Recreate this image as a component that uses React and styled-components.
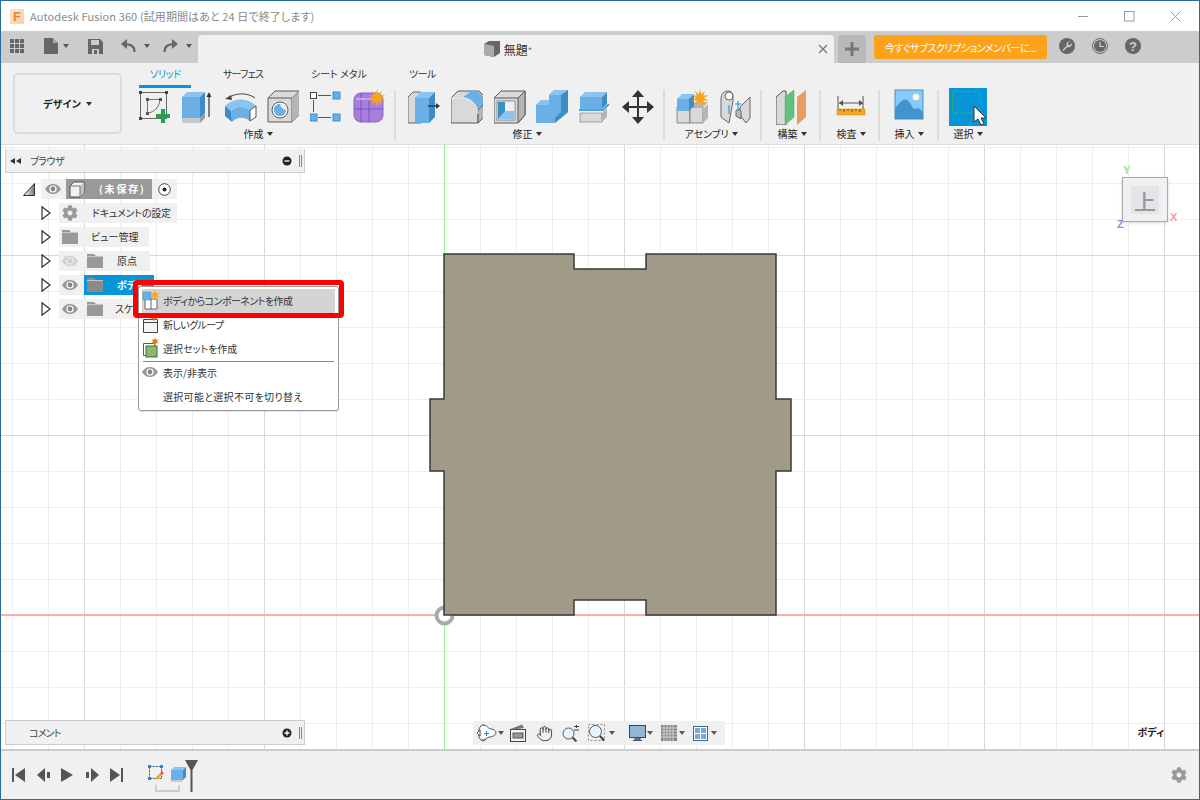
import React from "react";
import styled, { createGlobalStyle } from "styled-components";
import { FaCog } from "react-icons/fa";
import { Hand } from "lucide-react";

const Global = createGlobalStyle`
  html, body { margin: 0; padding: 0; background: #fff; overflow: hidden; }
  body { font-family: "Noto Sans CJK JP", "Liberation Sans", sans-serif; font-feature-settings: "palt"; }
  * { box-sizing: border-box; }
`;

const Win = styled.div`
  width: 1200px; height: 800px; border: 1px solid #2b6c9b; display: flex; flex-direction: column; background: #fff; overflow: hidden;
`;
const TitleBar = styled.div`
  height: 30px; background: #fff; display: flex; align-items: center; padding-left: 9px; flex: none;
`;
const Logo = styled.div`
  width: 14px; height: 15px; margin-right: 6px; background: linear-gradient(135deg, #fbe3c8, #f9d2a8); color: #e8842a; font: bold 13px/15px "Liberation Sans", sans-serif; text-align: center;
`;
const TitleText = styled.div`
  font-size: 11px; color: #8a8a8a; white-space: nowrap; letter-spacing: 0.1px;
`;
const WinControls = styled.div`
  margin-left: auto; display: flex; align-items: center; gap: 35px; padding-right: 18px;
`;
const TabBar = styled.div`
  height: 32px; background: #ccc; display: flex; flex: none; align-items: stretch; padding-left: 9px;
`;
const QuickTools = styled.div`
  width: 188px; display: flex; align-items: center; padding-bottom: 2px; flex: none;
`;
const QuickIcon = styled.span`
  display: inline-flex; margin-left: ${p => p.$ml || 0}px; width: ${p => p.$w || 15}px; justify-content: center;
`;
const Caret = styled.span`
  display: inline-block; flex: none; width: 0; height: 0; margin-left: ${p => p.$ml || 0}px;
  border-left: ${p => p.$s || 3}px solid transparent; border-right: ${p => p.$s || 3}px solid transparent;
  border-top: ${p => (p.$s || 3) + 1}px solid ${p => p.$c || "#555"};
`;
const DocTab = styled.div`
  margin-top: 4px; width: 636px; background: #f0f0f0; border-radius: 4px 4px 0 0; position: relative; display: flex; align-items: center; justify-content: center; font-size: 12px; color: #333; gap: 4px; padding-right: 16px; flex: none;
`;
const TabStar = styled.span`
  color: #a66; font-size: 10px;
`;
const TabClose = styled.span`
  position: absolute; right: 6px; top: 9px; display: flex;
`;
const AddTab = styled.div`
  margin: 4px 0 0 4px; width: 28px; background: #b9b9b9; border-radius: 4px 4px 0 0; display: flex; align-items: center; justify-content: center; flex: none;
`;
const Upgrade = styled.div`
  margin: 4px 0 4px 8px; width: 173px; background: #fca31b; color: #fff; font-size: 10px; letter-spacing: -0.45px; border-radius: 3px; display: flex; align-items: center; justify-content: center; flex: none; white-space: nowrap;
`;
const RoundTools = styled.div`
  display: flex; align-items: center; gap: 17px; margin-left: 12px; padding-bottom: 2px;
`;
const Ribbon = styled.div`
  height: 82px; background: #f0f0f0; display: flex; flex: none; border-bottom: 1px solid #ddd; padding-left: 12px;
`;
const DesignBtn = styled.div`
  margin-top: 10px; width: 109px; height: 61px; border: 2px solid #dcdcdc; border-radius: 5px; display: flex; align-items: center; justify-content: center; gap: 5px; font-size: 10px; font-weight: 700; color: #222; flex: none;
`;
const RibbonMain = styled.div`
  margin-left: 17px; padding-top: 1px; display: flex; flex-direction: column;
`;
const TabRow = styled.div`
  height: 24px; position: relative; display: flex; font-size: 10px; color: #333;
`;
const RibTab = styled.div`
  width: ${p => p.$w}px; padding-left: ${p => p.$pl}px; padding-top: 3px; color: ${p => p.$active ? "#0696d7" : "#333"}; white-space: nowrap; height: 24px; border-bottom: 3px solid ${p => p.$active ? "#0696d7" : "transparent"}; line-height: 14px; letter-spacing: ${p => p.$ls || 0}px;
`;
const RibTabSpacer = styled.div`
  width: ${p => p.$w}px;
`;
const Groups = styled.div`
  display: flex;
`;
const Group = styled.div`
  width: ${p => p.$w}px; padding-left: ${p => p.$pl || 0}px; position: relative; display: flex; flex-direction: column; flex: none;
  ${p => p.$sep ? `&::after { content: ""; position: absolute; right: 0; top: 2px; width: 2px; height: 51px; background: #dcdcdc; }` : ""}
`;
const IconRow = styled.div`
  display: flex; gap: ${p => p.$gap || 0}px; height: 36px; align-items: flex-start; padding-top: 1px;
`;
const Slot = styled.div`
  width: ${p => p.$w || 32}px; height: 36px; flex: none;
`;
const GroupLabel = styled.div`
  width: ${p => p.$w}px; padding-right: ${p => p.$pr || 0}px; margin-top: 3px; display: flex; align-items: center; justify-content: center; gap: 3px; font-size: 10px; line-height: 14px; color: #222; white-space: nowrap;
`;
const Canvas = styled.div`
  flex: 1; position: relative; overflow: hidden; background: #fff;
`;
const CanvasArt = styled.svg`
  display: block; position: absolute; left: 0; top: 0;
`;
const Dock = styled.div`
  position: absolute; left: 4px; top: 4px; width: 300px;
`;
const PanelHead = styled.div`
  height: 24px; width: 300px; background: #f0f0f0; border: 1px solid #ccc; border-top: none; display: flex; align-items: center; font-size: 10px; color: #444; padding: 0 2px 0 4px;
  ${p => p.$full ? "border-top: 1px solid #ccc; height: 25px;" : ""}
`;
const PanelTitle = styled.span`
  margin-left: ${p => p.$ml}px; flex: 1; letter-spacing: ${p => p.$ls || 0}px;
`;
const Handle = styled.span`
  width: 3px; height: 12px; border-left: 1px solid #888; border-right: 1px solid #888; margin-left: 7px;
`;
const Tree = styled.div`
  padding-top: 6px; display: flex; flex-direction: column; gap: 4px;
`;
const Row = styled.div`
  height: 20px; display: flex; align-items: center; padding-left: ${p => p.$indent}px;
`;
const Toggle = styled.span`
  width: 18px; display: flex; flex: none;
`;
const Chip = styled.div`
  height: 20px; width: ${p => p.$w}px; background: #f0f0f0; display: flex; align-items: center; padding-left: ${p => p.$pl ?? 3}px; font-size: 10px; color: #333; white-space: nowrap; flex: none;
`;
const IconCell = styled.span`
  width: 16px; height: 16px; flex: none; display: flex; align-items: center; justify-content: center; margin-left: ${p => p.$ml || 0}px;
  & + & { margin-left: 9px; }
`;
const RowText = styled.span`
  margin-left: ${p => p.$ml ?? 14}px; letter-spacing: ${p => p.$ls || 0}px; padding-bottom: 1px;
`;
const RootChip = styled.div`
  width: 86px; height: 20px; margin-left: 5px; background: #999; color: #fff; font-weight: 700; display: flex; align-items: center; padding-left: 3px; font-size: 10px; white-space: nowrap;
`;
const SelChip = styled.div`
  width: 70px; height: 20px; background: #0696d7; color: #fff; font-weight: 700; display: flex; align-items: center; padding-left: 3px; font-size: 10px; flex: none;
`;
const Menu = styled.div`
  position: absolute; left: 137px; top: 141px; width: 201px; height: 125px; background: #fff; border: 1px solid #999; border-radius: 3px; padding: 2px 3px; z-index: 3; box-shadow: 0 1px 1px rgba(0,0,0,.1);
`;
const MenuItem = styled.div`
  height: 24px; display: flex; align-items: center; font-size: 10px; color: #333; background: ${p => p.$hi ? "#d4d4d4" : "transparent"}; white-space: nowrap; padding-bottom: 2px; letter-spacing: ${p => p.$ls || 0}px;
`;
const MenuIcon = styled.span`
  width: 21px; height: 20px; flex: none; display: flex; align-items: center;
`;
const MenuSep = styled.div`
  height: 1px; background: #888; margin: 0 1px -1px;
`;
const RedFrame = styled.div`
  position: absolute; left: -6px; top: -7px; width: 211px; height: 38px; border: 5px solid #f00; border-radius: 4px;
`;
const ViewCube = styled.div`
  position: absolute; left: 1121px; top: 32px; width: 46px; height: 45px; background: #f0f0f0; border: 1px solid #aaa; box-shadow: 0 1px 3px rgba(0,0,0,.15); display: flex; align-items: center; justify-content: center;
`;
const CubeFace = styled.div`
  width: 28px; height: 28px; background: #e4e4ea; color: #999; font-size: 22px; font-weight: 500; display: flex; align-items: center; justify-content: center;
`;
const Axis = styled.span`
  position: absolute; left: ${p => p.$x}px; top: ${p => p.$y}px; color: ${p => p.$c}; font: bold 11px/12px "Liberation Sans", sans-serif;
`;
const CommentDock = styled.div`
  position: absolute; left: 4px; bottom: 4px; width: 300px;
`;
const NavBar = styled.div`
  position: absolute; left: 472px; bottom: 4px; width: 252px; height: 24px; background: #f0f0f0; display: flex; align-items: center;
`;
const NavItem = styled.span`
  display: inline-flex; margin-left: ${p => p.$ml || 0}px; flex: none;
`;
const Context = styled.div`
  position: absolute; right: 35px; bottom: 10px; font-size: 10px; font-weight: 700; color: #222;
`;
const Timeline = styled.div`
  height: 50px; flex: none; background: #f0f0f0; border-top: 2px solid #ccc; display: flex; align-items: center; padding: 0 12px 0 11px;
`;
const PlayBtn = styled.span`
  display: flex; width: 13px; margin-right: 11.5px; flex: none;
`;
const Track = styled.div`
  position: relative; margin-left: 13.5px; display: flex; gap: 7px; align-items: flex-start; padding-top: 5px; height: 30px; width: 60px;
`;
const Bracket = styled.div`
  position: absolute; left: 7px; top: 25px; width: 25px; height: 7px; border: 2px solid #ccc; border-top: none;
`;
const Marker = styled.div`
  position: absolute; left: 37px; top: 0;
`;
const GearWrap = styled.span`
  margin-left: auto; display: flex; color: #999;
`;

const star = (cx, cy, r1, r2, n = 10) =>
  Array.from({ length: n * 2 }, (_, i) => {
    const r = i % 2 ? r2 : r1, a = (Math.PI * i) / n - Math.PI / 2;
    return `${(cx + r * Math.cos(a)).toFixed(1)},${(cy + r * Math.sin(a)).toFixed(1)}`;
  }).join(" ");

const B1 = "#6ab0e6", B2 = "#3f8dc6", B3 = "#8cc4f0", G1 = "#d9d9d9", G2 = "#b5b5b5", OL = "#5a5a5a", OR = "#f9a51a";
const Icon = ({ w = 32, h = 36, children }) => <svg width={w} height={h} viewBox={`0 0 ${w} ${h}`} style={{ display: "block" }}>{children}</svg>;

const SketchIc = () => <Icon>
  <rect x="1.5" y="3.5" width="26" height="26" fill="none" stroke="#666" />
  {[[0, 2], [26, 2], [0, 28]].map(([x, y], i) => <rect key={i} x={x} y={y} width="3" height="3" fill="#444" />)}
  <path d="M8.5 11.5V24.5M8.5 10.5H21.5" stroke="#777" fill="none" />
  <rect x="7" y="9" width="3" height="3" fill="#555" /><rect x="20" y="9" width="3" height="3" fill="#555" /><rect x="7" y="23" width="3" height="3" fill="#555" />
  <path d="M21 11C20 18 16 23 9 24" stroke="#666" fill="none" />
  <path d="M22 20h4v5h5v4h-5v5h-4v-5h-5v-4h5z" fill="#22a24a" />
</Icon>;
const ExtrudeIc = () => <Icon>
  <path d="M0 29h18v5H0z" fill="#c8c8c8" /><path d="M18 29l5-5v5l-5 5z" fill="#999" />
  <path d="M0 8h18v21H0z" fill={B1} /><path d="M0 8l5-5h18l-5 5z" fill={B3} /><path d="M18 8l5-5v21l-5 5z" fill={B2} />
  <path d="M27 28V6" stroke="#333" strokeWidth="1.2" /><path d="M24.5 8L27 3l2.500 5z" fill="#333" />
</Icon>;
const RevolveIc = () => <Icon>
  <path d="M3 9C10 4 22 3 30 9" stroke="#444" fill="none" /><path d="M0 10l6-4 1 5z" fill="#444" />
  <path d="M0 17C8 9 22 8 31 17l-6 4C18 17 11 17 6 22z" fill={B3} />
  <path d="M6 22C11 17 18 17 25 21v11C18 27 12 28 7 33z" fill={B1} />
  <path d="M0 17l6 5 1 11-7-6z" fill={B2} />
  <path d="M25 21l6-4v11l-6 4z" fill="#fff" stroke="#555" />
</Icon>;
const HoleIc = () => <Icon>
  <path d="M1 9L8 2h24v24l-7 7H1z" fill={G1} stroke={OL} />
  <path d="M1 9h24v24M25 9l7-7" fill="none" stroke={OL} />
  <path d="M25 9l7-7v24l-7 7z" fill={G2} />
  <circle cx="13" cy="21" r="8" fill="#fff" stroke={OL} /><circle cx="13" cy="21" r="6.2" fill={B1} />
  <path d="M13 14.5a6.5 6.5 0 0 1 6.5 6.5c-3 0-6-2-6.5-6.5z" fill="#eee" />
</Icon>;
const PatternIc = () => <Icon>
  <rect x="0.5" y="3.5" width="6" height="6" fill="#fff" stroke="#444" />
  <rect x="23" y="3" width="7" height="7" fill={B1} stroke={B2} />
  <rect x="0" y="25" width="7" height="7" fill={B1} stroke={B2} />
  <rect x="23" y="25" width="7" height="7" fill={B1} stroke={B2} />
  <path d="M8 6.5H21M3.5 11V23M8 28.5H21" stroke="#555" />
</Icon>;
const SolidStarIc = () => <Icon>
  <rect x="1" y="4" width="29" height="29" rx="7" fill="#a77fdd" stroke="#8a62c4" />
  <path d="M1 20H30M16 9V33M8 4v29" stroke="#7d55b8" fill="none" />
  <path d="M3 10h20" stroke="#c4a6ee" strokeWidth="2" />
  <polygon points={star(24, 9, 9, 4)} fill={OR} />
</Icon>;
const PressIc = () => <Icon>
  <path d="M0 8l5-5h8v31H0z" fill={G1} stroke="#666" />
  <path d="M7 9h14v25H7z" fill={B1} /><path d="M7 9l5-6h15l-6 6z" fill={B3} /><path d="M21 9l6-6v25l-6 6z" fill={B2} />
  <path d="M20 17H29" stroke="#333" strokeWidth="1.4" /><path d="M28 14l4 3-4 3z" fill="#333" />
</Icon>;
const FilletIc = () => <Icon>
  <path d="M0 9L7 2h21l5 5v7l-6 5v15H0z" fill={G1} stroke={OL} />
  <path d="M22 1c7 1 11 6 11 14l-7 5C24 13 20 10 12 8z" fill={B1} />
  <path d="M27 34V21l6-6v13z" fill={G2} stroke={OL} />
  <path d="M0 9h10c10 0 17 7 17 16" fill="none" stroke="#eee" />
</Icon>;
const ShellIc = () => <Icon>
  <path d="M0 9L7 2h24v24l-7 8H0z" fill={G1} stroke={OL} />
  <path d="M24 9l7-7v24l-7 8z" fill={G2} stroke={OL} /><path d="M0 9h24" stroke={OL} />
  <rect x="3" y="12" width="18" height="19" fill="#fff" stroke="#888" />
  <rect x="4" y="13" width="16" height="17" fill={B2} />
  <path d="M11 13h9v9h-9z" fill="#f0f0f0" /><path d="M4 30l7-8h9v8z" fill={B3} />
</Icon>;
const CombineIc = () => <Icon>
  <path d="M0 16l5-5h8V6l5-5h14v22l-7 6h-6v5H0z" fill={B1} />
  <path d="M18 1h14l-7 5H13zM0 16l5-5h8v5z" fill={B3} />
  <path d="M25 6l7-5v22l-7 6zM19 29l6-6v6l-6 5z" fill={B2} />
</Icon>;
const SplitIc = () => <Icon>
  <path d="M1 8h22v12H1z" fill={B1} /><path d="M1 8l5-5h22l-5 5z" fill={B3} /><path d="M23 8l5-5v12l-5 5z" fill={B2} />
  <path d="M0 21h24l6-6" stroke="#1e88d6" strokeWidth="1.4" fill="none" /><path d="M0 24h24l7-6" stroke="#fff" strokeWidth="1.2" fill="none" />
  <path d="M1 24h22v9H1z" fill={G1} stroke="#777" strokeWidth=".6" /><path d="M23 24l5-5v9l-5 5z" fill={G2} />
</Icon>;
const MoveIc = () => <Icon>
  <path d="M15 7h2v10h10v2H17v10h-2V19H5v-2h10z" fill="#333" />
  <path d="M16 1l6 7H10zM16 35l6-7H10zM0 18l7-6v12zM32 18l-7-6v12z" fill="#333" />
</Icon>;
const ComponentIc = () => <Icon>
  <path d="M1 18h13v16H1z" fill={G1} stroke="#666" strokeWidth=".7" /><path d="M14 18h13v16H14z" fill={G1} stroke="#666" strokeWidth=".7" />
  <path d="M27 20l5-5v14l-5 5zM14 18l5-5h13l-5 5z" fill={G2} />
  <path d="M1 10h12v12H1z" fill={B1} /><path d="M1 10l5-5h12l-5 5z" fill={B3} /><path d="M13 10l5-5v12l-5 5z" fill={B2} />
  <polygon points={star(24, 9, 9, 4)} fill={OR} />
</Icon>;
const JointIc = () => <Icon>
  <path d="M1 10C1 4 5 2 8 2s5 2 5 5v5L9 34 1 28z" fill={G1} stroke="#666" />
  <ellipse cx="9" cy="7" rx="4" ry="4" fill="#fff" stroke="#666" /><path d="M9 16v9" stroke="#1e88d6" />
  <path d="M20 18l10-10v21l-4 5-6-8z" fill={G1} stroke="#666" /><path d="M16 22c0-2 5-2 5 0v8l-5-3z" fill="#bbb" stroke="#666" /><path d="M18 12v10M15 15h6" stroke="#1e88d6" />
</Icon>;
const BuildIc = () => <Icon>
  <path d="M0 8l7-6h3v34H0z" fill={G1} stroke="#555" />
  <path d="M9 8l9-7v27l-9 8z" fill="#62c07e" stroke="#4da868" strokeWidth=".5" />
  <path d="M21 8l9-7v27l-9 8z" fill="#e79c62" />
</Icon>;
const RulerIc = () => <Icon w={30}>
  <path d="M2 7v14M27 7v14" stroke="#555" />
  <path d="M3 14h24" stroke="#555" /><path d="M7 11l-4 3 4 3zM23 11l4 3-4 3z" fill="#555" />
  <rect x="1" y="20" width="28" height="6" fill="#f5a623" stroke="#d68a10" strokeWidth=".5" />
  <path d="M4 20v2M8 20v3M12 20v2M16 20v3M20 20v2M24 20v3" stroke="#7a5200" />
</Icon>;
const ImageIc = () => <Icon w={30}>
  <rect x="1" y="1" width="28" height="29" fill="#8ac9fb" stroke="#4a90c4" />
  <circle cx="22" cy="8" r="3.3" fill="#fffbd8" />
  <path d="M1 20C5 14 9 9 13 11s5 9 8 9 4-3 8 4v6H1z" fill="#4393cf" />
</Icon>;
const SelectTile = () => <svg width="38" height="38" viewBox="0 0 38 38" style={{ display: "block", marginTop: -1 }}>
  <rect width="38" height="38" fill="#0696d7" />
  <rect x="3.5" y="3.5" width="27" height="21.5" fill="none" stroke="#3bb54a" strokeDasharray="4 3" />
  <path d="M25 18v16l4-3 3 6 3-1-3-6h5z" fill="#fff" stroke="#333" />
</svg>;
const Eye = ({ faded }) => <svg width="16" height="12" viewBox="0 0 16 12" style={{ opacity: faded ? .35 : 1 }}>
  <path d="M0 6C3 1.5 5.5 1 8 1s5 .5 8 5c-3 4.5-5.5 5-8 5S3 10.500 0 6z" fill="#999" />
  <circle cx="8" cy="6" r="3.600" fill="#fff" /><circle cx="8" cy="6" r="2.400" fill="#888" />
  {faded && <path d="M2 1l12 10" stroke="#999" strokeWidth="1.5" />}
</svg>;
const Folder = ({ c = "#999" }) => <svg width="16" height="14" viewBox="0 0 16 14">
  <path d="M0 0h7l2 2h7v12H0z" fill={c} /><path d="M0 2.500h16" stroke="#ddd" strokeWidth=".7" />
</svg>;
const Tri = ({ open }) => open
  ? <svg width="12" height="13" viewBox="0 0 12 13"><path d="M.5 12.500L11.500.5v12z" fill="url(#tg)" stroke="#333" /><defs><linearGradient id="tg" x1="0" x2="1"><stop offset="0" stopColor="#fff" /><stop offset="1" stopColor="#777" /></linearGradient></defs></svg>
  : <svg width="10" height="14" viewBox="0 0 10 14"><path d="M1 .8L9 7l-8 6.200z" fill="#fff" stroke="#333" strokeWidth="1.200" /></svg>;
const CompCube = () => <svg width="16" height="17" viewBox="0 0 16 17">
  <path d="M1 5l4-4h10v11l-4 4H1z" fill="#eef2f8" stroke="#333" strokeWidth=".8" /><path d="M11 5l4-4v11l-4 4z" fill="#bcc4d2" /><path d="M1 5h10v11" fill="none" stroke="#777" />
</svg>;
const Radio = () => <svg width="13" height="13" viewBox="0 0 13 13"><circle cx="6.500" cy="6.500" r="5.800" fill="#fff" stroke="#444" /><circle cx="6.500" cy="6.500" r="2" fill="#222" /></svg>;
const RoundBtn = ({ children }) => <svg width="16" height="16" viewBox="0 0 16 16" style={{ display: "block" }}>{children}</svg>;

const MenuCompIc = () => <svg width="19" height="20" viewBox="0 0 19 20">
  <path d="M3 9h12v10H3zM9 9v10" fill="#fff" stroke="#666" /><path d="M1 2h8v8H1z" fill={B1} stroke={B2} strokeWidth=".6" /><polygon points={star(13, 5, 6, 2, 6)} fill={OR} />
</svg>;
const MenuGroupIc = () => <svg width="19" height="20" viewBox="0 0 19 20">
  <path d="M1.500 5.500h14v13h-14z" fill="#f4f4f8" stroke="#444" /><path d="M1.500 8.500h14" stroke="#444" /><polygon points={star(12, 3.500, 4, 2, 6)} fill="#e8791a" />
</svg>;
const MenuSetIc = () => <svg width="19" height="20" viewBox="0 0 19 20">
  <path d="M1.500 5.500h11v12h-11z" fill="none" stroke="#2a7a2a" /><rect x="4" y="8" width="11" height="11" fill="#8fb56f" stroke="#2a7a2a" /><polygon points={star(13, 3.500, 4, 2, 6)} fill="#e8791a" />
</svg>;

const grid = () => {
  const xs = [], ys = [];
  for (let x = 12; x < 1200; x += 36) xs.push(x);
  for (let y = 147; y < 750; y += 36) ys.push(y);
  return { xs, ys };
};
const Shape = "444,254 574,254 574,269 646,269 646,254 776,254 776,399 791,399 791,471 776,471 776,615 646,615 646,600 574,600 574,615 444,615 444,471 430,471 430,399 444,399";

const Scene = () => {
  const { xs, ys } = grid();
  return <CanvasArt width="1198" height="605" viewBox="1 145 1198 605">
    {xs.map(x => <line key={x} x1={x + .5} x2={x + .5} y1="145" y2="750" stroke={(x - 84) % 180 === 0 ? "#d8d8d8" : "#eeeeee"} />)}
    {ys.map(y => <line key={y} y1={y + .5} y2={y + .5} x1="0" x2="1200" stroke={(y - 255) % 180 === 0 ? "#d8d8d8" : "#eeeeee"} />)}
    <line x1="444.500" x2="444.500" y1="145" y2="750" stroke="#90f090" />
    <line y1="615" y2="615" x1="0" x2="1200" stroke="#ff9c9c" strokeWidth="1.500" />
    <circle cx="444.500" cy="615.500" r="8" fill="#fff" stroke="#aaa" strokeWidth="4" />
    <polygon points={Shape} fill="#a09a88" stroke="#3a3a3a" strokeWidth="1.500" />
  </CanvasArt>;
};

export default function App() {
  return <Win>
    <Global />
    <TitleBar>
      <Logo>F</Logo>
      <TitleText>Autodesk Fusion 360 (試用期間はあと 24 日で終了します)</TitleText>
      <WinControls>
        <svg width="11" height="11" viewBox="0 0 11 11"><path d="M0 5.500h10" stroke="#999" /></svg>
        <svg width="11" height="11" viewBox="0 0 11 11"><rect x=".5" y=".5" width="9.500" height="9.500" fill="none" stroke="#999" /></svg>
        <svg width="11" height="11" viewBox="0 0 11 11"><path d="M.5.5l10 10M10.500.5l-10 10" stroke="#999" /></svg>
      </WinControls>
    </TitleBar>
    <TabBar>
      <QuickTools>
        <QuickIcon $w={15}>
          <svg width="15" height="15" viewBox="0 0 15 15">{[0, 5, 10].flatMap(x => [0, 5, 10].map(y => <rect key={`${x}${y}`} x={x} y={y} width="4" height="4" fill="#666" />))}</svg>
        </QuickIcon>
        <QuickIcon $ml={18} $w={15}><svg width="14" height="16" viewBox="0 0 14 16"><path d="M0 0h9l5 5v11H0z" fill="#666" /><path d="M9 0v5h5" fill="#aaa" /></svg></QuickIcon>
        <Caret $ml={5} />
        <QuickIcon $ml={19} $w={15}><svg width="15" height="15" viewBox="0 0 15 15"><path d="M0 0h12l3 3v12H0z" fill="#666" /><path d="M3 1h8v5H3z" fill="#ccc" /><path d="M4 10h7v5H4z" fill="#ccc" /><rect x="6" y="11" width="3" height="4" fill="#666" /></svg></QuickIcon>
        <QuickIcon $ml={18} $w={15}><svg width="15" height="14" viewBox="0 0 15 14"><path d="M13.500 13C13.500 7 10 5 2 5" stroke="#666" strokeWidth="2.200" fill="none" /><path d="M6 0L0 5l6 5z" fill="#666" /></svg></QuickIcon>
        <Caret $ml={8} />
        <QuickIcon $ml={13} $w={15}><svg width="15" height="14" viewBox="0 0 15 14"><path d="M1.500 13C1.500 7 5 5 13 5" stroke="#666" strokeWidth="2.200" fill="none" /><path d="M9 0l6 5-6 5z" fill="#666" /></svg></QuickIcon>
        <Caret $ml={8} />
      </QuickTools>
      <DocTab>
        <svg width="16" height="16" viewBox="0 0 16 16"><path d="M0 3l5-3h11v12l-6 4-10-2z" fill="#666" /><path d="M0 3l10 2v11L0 14z" fill="#aaa" /></svg>
        <span>無題<TabStar>*</TabStar></span>
        <TabClose><svg width="10" height="10" viewBox="0 0 10 10"><path d="M1 1l8 8M9 1L1 9" stroke="#777" strokeWidth="1.300" /></svg></TabClose>
      </DocTab>
      <AddTab><svg width="14" height="14" viewBox="0 0 14 14"><path d="M5.500 0h3v5.500H14v3H8.500V14h-3V8.500H0v-3h5.500z" fill="#777" /></svg></AddTab>
      <Upgrade>今すぐサブスクリプションメンバーに...</Upgrade>
      <RoundTools>
        <RoundBtn><circle cx="8" cy="8" r="8" fill="#666" /><path d="M11.500 3.500a3.500 3.500 0 0 0-4 4.500L3.500 12l1 1 4-4a3.500 3.500 0 0 0 4.500-4l-2 2-1.800-.3-.3-1.800z" fill="#ccc" /></RoundBtn>
        <RoundBtn><circle cx="8" cy="8" r="7.500" fill="#ccc" stroke="#666" /><circle cx="8" cy="8" r="6" fill="#666" /><path d="M8 3.500V8.500H12" stroke="#ccc" strokeWidth="1.200" fill="none" /></RoundBtn>
        <RoundBtn><circle cx="8" cy="8" r="8" fill="#666" /><text x="8" y="12.500" textAnchor="middle" fontFamily="Liberation Sans" fontWeight="700" fontSize="13" fill="#ccc">?</text></RoundBtn>
      </RoundTools>
    </TabBar>
    <Ribbon>
      <DesignBtn>デザイン <Caret $c="#333" /></DesignBtn>
      <RibbonMain>
        <TabRow>
          <RibTab $active $w={52} $pl={11} $ls={-.4}>ソリッド</RibTab>
          <RibTabSpacer $w={32} />
          <RibTab $w={88} $pl={0} $ls={-.8}>サーフェス</RibTab>
          <RibTab $w={98} $pl={0}>シート メタル</RibTab>
          <RibTab $w={40} $pl={0} $ls={-.5}>ツール</RibTab>
        </TabRow>
        <Groups>
          <Group $w={257} $sep>
            <IconRow $gap={10.800}><Slot><SketchIc /></Slot><Slot><ExtrudeIc /></Slot><Slot><RevolveIc /></Slot><Slot><HoleIc /></Slot><Slot><PatternIc /></Slot><Slot><SolidStarIc /></Slot></IconRow>
            <GroupLabel $w={246} $pr={8}>作成 <Caret $c="#333" /></GroupLabel>
          </Group>
          <Group $w={269} $pl={12} $sep>
            <IconRow $gap={10.800}><Slot><PressIc /></Slot><Slot><FilletIc /></Slot><Slot><ShellIc /></Slot><Slot><CombineIc /></Slot><Slot><SplitIc /></Slot><Slot><MoveIc /></Slot></IconRow>
            <GroupLabel $w={246} $pr={8}>修正 <Caret $c="#333" /></GroupLabel>
          </Group>
          <Group $w={97} $pl={11} $sep>
            <IconRow $gap={12}><Slot><ComponentIc /></Slot><Slot><JointIc /></Slot></IconRow>
            <GroupLabel $w={76} $pr={6}>アセンブリ <Caret $c="#333" /></GroupLabel>
          </Group>
          <Group $w={59} $pl={14} $sep>
            <IconRow><Slot><BuildIc /></Slot></IconRow>
            <GroupLabel $w={32}>構築 <Caret $c="#333" /></GroupLabel>
          </Group>
          <Group $w={59} $pl={15} $sep>
            <IconRow><Slot $w={30}><RulerIc /></Slot></IconRow>
            <GroupLabel $w={30}>検査 <Caret $c="#333" /></GroupLabel>
          </Group>
          <Group $w={59} $pl={14} $sep>
            <IconRow><Slot $w={30}><ImageIc /></Slot></IconRow>
            <GroupLabel $w={30}>挿入 <Caret $c="#333" /></GroupLabel>
          </Group>
          <Group $w={60} $pl={10}>
            <IconRow><Slot $w={38}><SelectTile /></Slot></IconRow>
            <GroupLabel $w={38}>選択 <Caret $c="#333" /></GroupLabel>
          </Group>
        </Groups>
      </RibbonMain>
    </Ribbon>
    <Canvas>
      <Scene />
      <Dock>
        <PanelHead>
          <svg width="11" height="6" viewBox="0 0 11 6"><path d="M5 0v6L0 3zM11 0v6L6 3z" fill="#333" /></svg>
          <PanelTitle $ml={9} $ls={-.5}>ブラウザ</PanelTitle>
          <svg width="10" height="10" viewBox="0 0 10 10"><circle cx="5" cy="5" r="4.500" fill="#222" /><path d="M2.500 5h5" stroke="#fff" strokeWidth="1.300" /></svg>
          <Handle />
        </PanelHead>
        <Tree>
          <Row $indent={18}>
            <Toggle><Tri open /></Toggle>
            <Chip $w={136} $pl={4}>
              <IconCell><Eye /></IconCell>
              <RootChip><CompCube /><RowText $ml={14} $ls={1.8}>(未保存)</RowText></RootChip>
              <IconCell $ml={4}><Radio /></IconCell>
            </Chip>
          </Row>
          <Row $indent={36}>
            <Toggle><Tri /></Toggle>
            <Chip $w={118}><IconCell><FaCog size={16} color="#999" /></IconCell><RowText $ls={-.2}>ドキュメントの設定</RowText></Chip>
          </Row>
          <Row $indent={36}>
            <Toggle><Tri /></Toggle>
            <Chip $w={90}><IconCell><Folder /></IconCell><RowText $ml={13}>ビュー管理</RowText></Chip>
          </Row>
          <Row $indent={36}>
            <Toggle><Tri /></Toggle>
            <Chip $w={91}><IconCell><Eye faded /></IconCell><IconCell><Folder /></IconCell><RowText>原点</RowText></Chip>
          </Row>
          <Row $indent={36}>
            <Toggle><Tri /></Toggle>
            <Chip $w={25}><IconCell><Eye /></IconCell></Chip>
            <SelChip><IconCell><Folder c="#8a8a8a" /></IconCell><RowText>ボディ</RowText></SelChip>
          </Row>
          <Row $indent={36}>
            <Toggle><Tri /></Toggle>
            <Chip $w={100}><IconCell><Eye /></IconCell><IconCell><Folder /></IconCell><RowText $ml={12}>スケッチ</RowText></Chip>
          </Row>
        </Tree>
      </Dock>
      <Menu>
        <MenuItem $hi $ls={-.55}><MenuIcon><MenuCompIc /></MenuIcon>ボディからコンポーネントを作成</MenuItem>
        <MenuItem $ls={-.6}><MenuIcon><MenuGroupIc /></MenuIcon>新しいグループ</MenuItem>
        <MenuItem><MenuIcon><MenuSetIc /></MenuIcon>選択セットを作成</MenuItem>
        <MenuSep />
        <MenuItem><MenuIcon><Eye /></MenuIcon>表示/非表示</MenuItem>
        <MenuItem $ls={.3}><MenuIcon />選択可能と選択不可を切り替え</MenuItem>
        <RedFrame />
      </Menu>
      <Axis $x={1122} $y={19} $c="#8ee88e">Y</Axis>
      <Axis $x={1116} $y={73} $c="#8a8af5">Z</Axis>
      <Axis $x={1169} $y={66} $c="#f59a9a">X</Axis>
      <ViewCube><CubeFace>上</CubeFace></ViewCube>
      <CommentDock>
        <PanelHead $full>
          <PanelTitle $ml={19} $ls={-.8}>コメント</PanelTitle>
          <svg width="10" height="10" viewBox="0 0 10 10"><circle cx="5" cy="5" r="4.500" fill="#222" /><path d="M2.500 5h5M5 2.500v5" stroke="#fff" strokeWidth="1.300" /></svg>
          <Handle />
        </PanelHead>
      </CommentDock>
      <NavBar>
        <NavItem $ml={3}><svg width="21" height="18" viewBox="0 0 21 18"><ellipse cx="7" cy="9" rx="4.500" ry="8" fill="none" stroke="#555" /><path d="M6 1c6 0 6 4 9 4s5 2 5 4-4 4-6 4c-3 0-4 3-8 3" fill="#fff" stroke="#555" /><path d="M1 9l3-3v6z" fill="#fff" stroke="#555" /><path d="M8 9.500h5M10.500 7v5" stroke="#1e88d6" /></svg></NavItem>
        <Caret $ml={1} />
        <NavItem $ml={6}><svg width="16" height="18" viewBox="0 0 16 18"><rect x=".5" y="5.500" width="15" height="12" fill="#f4f4f4" stroke="#444" /><rect x="3" y="9" width="10" height="5" fill="#999" stroke="#555" /><path d="M.5 5L12 .5 14 4 4 5.500z" fill="#777" /></svg></NavItem>
        <NavItem $ml={10}><Hand size={17} color="#444" strokeWidth={1.4} /></NavItem>
        <NavItem $ml={9}><svg width="17" height="17" viewBox="0 0 17 17"><circle cx="6.500" cy="8.500" r="5.500" fill="#e8f2fa" stroke="#555" /><path d="M10.500 12.500l4 4" stroke="#444" strokeWidth="2" /><path d="M12 1.500h5M14.500 0v3M12 5h5" stroke="#444" /></svg></NavItem>
        <NavItem $ml={9}><svg width="17" height="18" viewBox="0 0 17 18"><rect x=".5" y=".5" width="16" height="16" fill="none" stroke="#888" strokeDasharray="2 2" /><circle cx="7.500" cy="7.500" r="6" fill="#e8f2fa" stroke="#555" /><path d="M12 12l4 4.500" stroke="#444" strokeWidth="2.200" /></svg></NavItem>
        <Caret $ml={4} />
        <NavItem $ml={14}><svg width="17" height="17" viewBox="0 0 17 17"><rect x=".5" y=".5" width="16" height="12" fill="#8fb7dc" stroke="#444" /><path d="M6 13h5v2H6zM4 15.500h9" stroke="#555" fill="#999" /></svg></NavItem>
        <Caret $ml={1} />
        <NavItem $ml={8}><svg width="16" height="16" viewBox="0 0 16 16"><rect width="16" height="16" fill="#888" />{[3, 6, 9, 12].map(v => <path key={v} d={`M${v} 0v16M0 ${v}h16`} stroke="#ddd" strokeWidth=".8" />)}</svg></NavItem>
        <Caret $ml={2} />
        <NavItem $ml={8}><svg width="15" height="15" viewBox="0 0 15 15"><rect x=".5" y=".5" width="14" height="14" fill="#fff" stroke="#39699a" /><rect x="2" y="2" width="5" height="5" fill="#7aa7d4" /><rect x="8" y="2" width="5" height="5" fill="#7aa7d4" /><rect x="2" y="8" width="5" height="5" fill="#7aa7d4" /><rect x="8" y="8" width="5" height="5" fill="#7aa7d4" /></svg></NavItem>
        <Caret $ml={3} />
      </NavBar>
      <Context>ボディ</Context>
    </Canvas>
    <Timeline>
      <PlayBtn><svg width="13" height="14" viewBox="0 0 13 14"><path d="M0 0h2v14H0zM13 0v14L3 7z" fill="#555" /></svg></PlayBtn>
      <PlayBtn><svg width="13" height="14" viewBox="0 0 13 14"><path d="M8 0v14L0 7zM10 4h3v6h-3z" fill="#555" /></svg></PlayBtn>
      <PlayBtn><svg width="13" height="14" viewBox="0 0 13 14"><path d="M0 0l12 7-12 7z" fill="#555" /></svg></PlayBtn>
      <PlayBtn><svg width="13" height="14" viewBox="0 0 13 14"><path d="M5 0v14l8-7zM0 4h3v6H0z" fill="#555" /></svg></PlayBtn>
      <PlayBtn><svg width="13" height="14" viewBox="0 0 13 14"><path d="M0 0v14l10-7zM11 0h2v14h-2z" fill="#555" /></svg></PlayBtn>
      <Track>
        <svg width="16" height="16" viewBox="0 0 16 16"><rect x="1.500" y="1.500" width="12" height="12" fill="none" stroke="#555" strokeDasharray="2 1" /><rect x="0" y="0" width="3" height="3" fill="#1e88d6" /><rect x="12" y="0" width="3" height="3" fill="#1e88d6" /><rect x="0" y="12" width="3" height="3" fill="#1e88d6" /><path d="M8 14l6-6" stroke="#f0a830" strokeWidth="2.500" /><circle cx="14" cy="8" r="1.500" fill="#e44" /></svg>
        <svg width="16" height="18" viewBox="0 0 16 18"><path d="M0 5h12v10H0z" fill={B1} /><path d="M0 5l3-3h12l-3 3z" fill={B3} /><path d="M12 5l3-3v10l-3 3z" fill={B2} /><path d="M0 15h12v2H0z" fill="#ccc" /></svg>
        <Bracket />
        <Marker><svg width="13" height="32" viewBox="0 0 13 32"><path d="M0 0h13L7.500 10V32h-2V10z" fill="#555" /></svg></Marker>
      </Track>
      <GearWrap><FaCog size={16} /></GearWrap>
    </Timeline>
  </Win>;
}
